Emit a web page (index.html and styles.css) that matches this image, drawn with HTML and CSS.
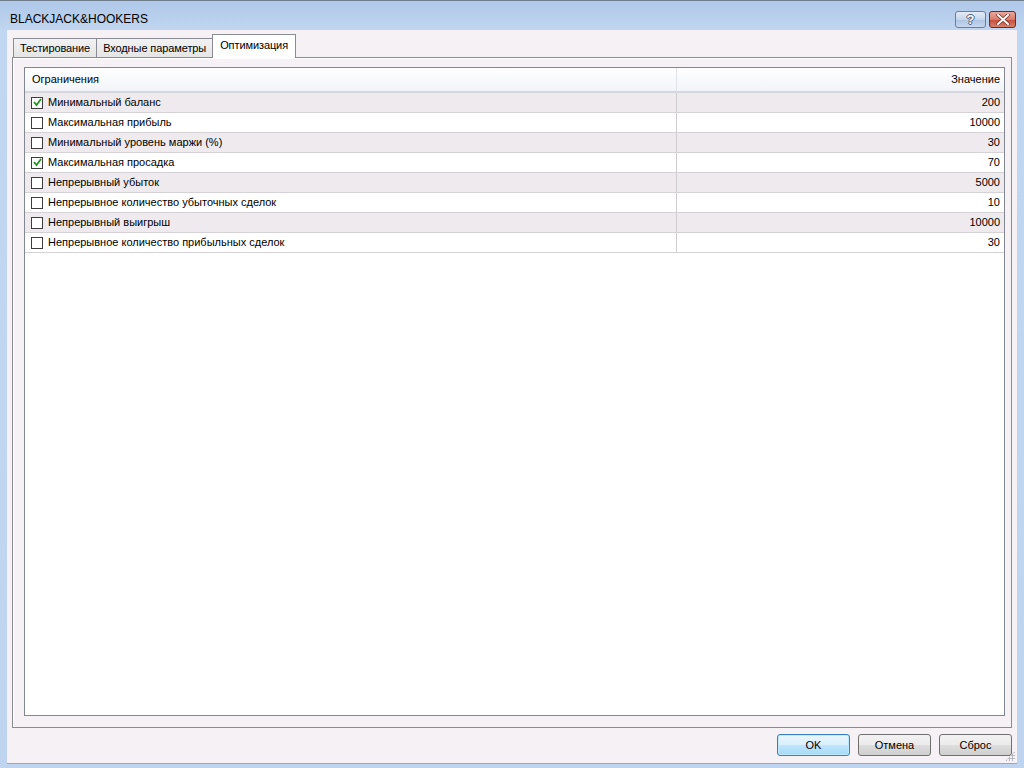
FILE: index.html
```html
<!DOCTYPE html>
<html lang="ru">
<head>
  <meta charset="UTF-8" />
  <title>BLACKJACK&amp;HOOKERS</title>
  <link rel="stylesheet" href="styles.css">
</head>
<body>
  <div class="window">
    <div class="titlebar">
      <div class="title">BLACKJACK&amp;HOOKERS</div>
      <div class="caption-btns">
        <div class="cap-btn help">?</div>
        <div class="cap-btn close">
          <svg width="14" height="11" viewBox="0 0 14 11">
            <path d="M2 1 L12 10 M12 1 L2 10" stroke="#7a2a22" stroke-width="3.4" stroke-linecap="square"/>
            <path d="M2 1 L12 10 M12 1 L2 10" stroke="#fff" stroke-width="2" stroke-linecap="square"/>
          </svg>
        </div>
      </div>
    </div>

    <div class="client">
      <div class="tabs">
        <div class="tab">Тестирование</div>
        <div class="tab">Входные параметры</div>
        <div class="tab active">Оптимизация</div>
      </div>

      <div class="tab-panel">
        <div class="grid">
          <div class="grid-head">
            <div class="cell name">Ограничения</div>
            <div class="cell value">Значение</div>
          </div>
          <div class="grid-body" id="rows"></div>
        </div>
      </div>

      <div class="footer">
        <button class="btn default">OK</button>
        <button class="btn">Отмена</button>
        <button class="btn">Сброс</button>
      </div>
      <div class="grip"></div>
    </div>
  </div>

  <script>
    const limits = [
      ["Минимальный баланс", "200", true],
      ["Максимальная прибыль", "10000", false],
      ["Минимальный уровень маржи (%)", "30", false],
      ["Максимальная просадка", "70", true],
      ["Непрерывный убыток", "5000", false],
      ["Непрерывное количество убыточных сделок", "10", false],
      ["Непрерывный выигрыш", "10000", false],
      ["Непрерывное количество прибыльных сделок", "30", false]
    ];

    const tick = '<svg width="9" height="9" viewBox="0 0 9 9"><path d="M1 4 L3.5 7 L8 1" fill="none" stroke="#1d9a1d" stroke-width="1.8"/></svg>';

    const rows = document.getElementById("rows");
    limits.forEach(([name, val, on], i) => {
      const row = document.createElement("div");
      row.className = "row" + (i % 2 === 0 ? " odd" : "");
      row.innerHTML =
        `<div class="cell name"><span class="check">${on ? tick : ""}</span>${name}</div>` +
        `<div class="cell value">${val}</div>`;
      rows.appendChild(row);
    });
  </script>
</body>
</html>
```

FILE: styles.css
```css
body {
  margin: 0;
  background: #bcd2ee;
  font-family: "Liberation Sans", Arial, sans-serif;
  font-size: 11px;
  color: #000;
}
.window {
  width: 1024px;
  height: 768px;
  display: flex;
  flex-direction: column;
  background: linear-gradient(#aec8e8, #c1d6f0 30px, #bfd4ef);
  border-top: 1px solid #6f7c8c;
  box-sizing: border-box;
}
.titlebar {
  height: 29px;
  display: flex;
  align-items: center;
  justify-content: space-between;
  padding: 0 8px 0 10px;
}
.title {
  font-size: 12px;
  color: #000;
  padding-top: 6px;
}
.caption-btns {
  display: flex;
  gap: 3px;
  padding-top: 7px;
}
.cap-btn {
  height: 17px;
  border-radius: 3px;
  display: flex;
  align-items: center;
  justify-content: center;
  box-sizing: border-box;
}
.help {
  width: 31px;
  border: 1px solid #6c7d9c;
  background: linear-gradient(#e3ecf7, #c5d6ec 50%, #aec3e0 51%, #c6d9f0);
  color: #fff;
  font-weight: bold;
  font-size: 13px;
  text-shadow: 1px 0 0 #4a5a78, -1px 0 0 #4a5a78, 0 1px 0 #4a5a78, 0 -1px 0 #4a5a78;
}
.close {
  width: 27px;
  border: 1px solid #6e2a25;
  background: linear-gradient(#e9a99d, #d77a6a 50%, #c24a38 51%, #d8816c);
}
.client {
  flex: 1;
  margin: 0 7px 4px 7px;
  background: #f5f1f5;
  display: flex;
  flex-direction: column;
  position: relative;
  border-bottom: 1px solid #9aa9bd;
}
.tabs {
  display: flex;
  padding: 5px 0 0 6px;
  height: 22px;
  align-items: flex-end;
}
.tab {
  height: 19px;
  line-height: 18px;
  padding: 0 6px;
  border: 1px solid #898c95;
  border-bottom: none;
  background: linear-gradient(#f2f2f2, #e5e5e5);
  margin-right: -1px;
  box-sizing: border-box;
  letter-spacing: -0.1px;
}
.tab.active {
  line-height: 20px;
  padding: 0 7px;
  background: #fff;
  position: relative;
  z-index: 1;
  margin-bottom: -1px;
  height: 24px;
}
.tab-panel {
  margin: 0 5px;
  height: 671px;
  border: 1px solid #898c95;
  box-shadow: inset 1px 1px 0 #fff;
  padding: 9px 6px 11px 11px;
  box-sizing: border-box;
  display: flex;
}
.grid {
  flex: 1;
  border: 1px solid #828790;
  background: #fff;
}
.grid-head {
  display: grid;
  grid-template-columns: 652px 1fr;
  height: 23px;
  background: linear-gradient(#ffffff, #f3f4f9);
  border-bottom: 2px solid #d6d7dc;
}
.grid-head .cell {
  line-height: 23px;
}
.grid-head .name {
  border-right: 1px solid #e2e3e8;
  padding-left: 7px;
}
.row {
  display: grid;
  grid-template-columns: 652px 1fr;
  height: 20px;
  border-bottom: 1px solid #d4d2d4;
  box-sizing: border-box;
}
.row.odd {
  background: #eeeaee;
}
.cell {
  line-height: 19px;
  white-space: nowrap;
}
.row .name {
  display: flex;
  align-items: center;
  border-right: 1px solid #cfcdcf;
  padding-left: 6px;
}
.value {
  text-align: right;
  padding-right: 4px;
}
.check {
  width: 12px;
  height: 12px;
  box-sizing: border-box;
  border: 1px solid #3d3d3d;
  background: #fff;
  margin-right: 5px;
  display: flex;
  align-items: center;
  justify-content: center;
}
.footer {
  display: flex;
  justify-content: flex-end;
  gap: 8px;
  padding: 6px 5px 0 0;
}
.btn {
  width: 73px;
  height: 22px;
  font-family: inherit;
  font-size: 11px;
  font-weight: normal;
  color: #000;
  border: 1px solid #707070;
  border-radius: 3px;
  background: linear-gradient(#f2f2f2, #ebebeb 50%, #dddddd 51%, #cfcfcf);
  padding: 0;
}
.btn.default {
  border-color: #3c7fb1;
  background: linear-gradient(#eaf6fd, #d9f0fc 50%, #bee6fd 51%, #a7d9f5);
  box-shadow: inset 0 0 0 1px #bfe8fb;
}
.grip {
  position: absolute;
  right: 2px;
  bottom: 2px;
  width: 10px;
  height: 10px;
  background: radial-gradient(circle, #b8b8c0 1px, transparent 1.2px) 0 0 / 3px 3px;
  clip-path: polygon(100% 0, 100% 100%, 0 100%);
}
```
